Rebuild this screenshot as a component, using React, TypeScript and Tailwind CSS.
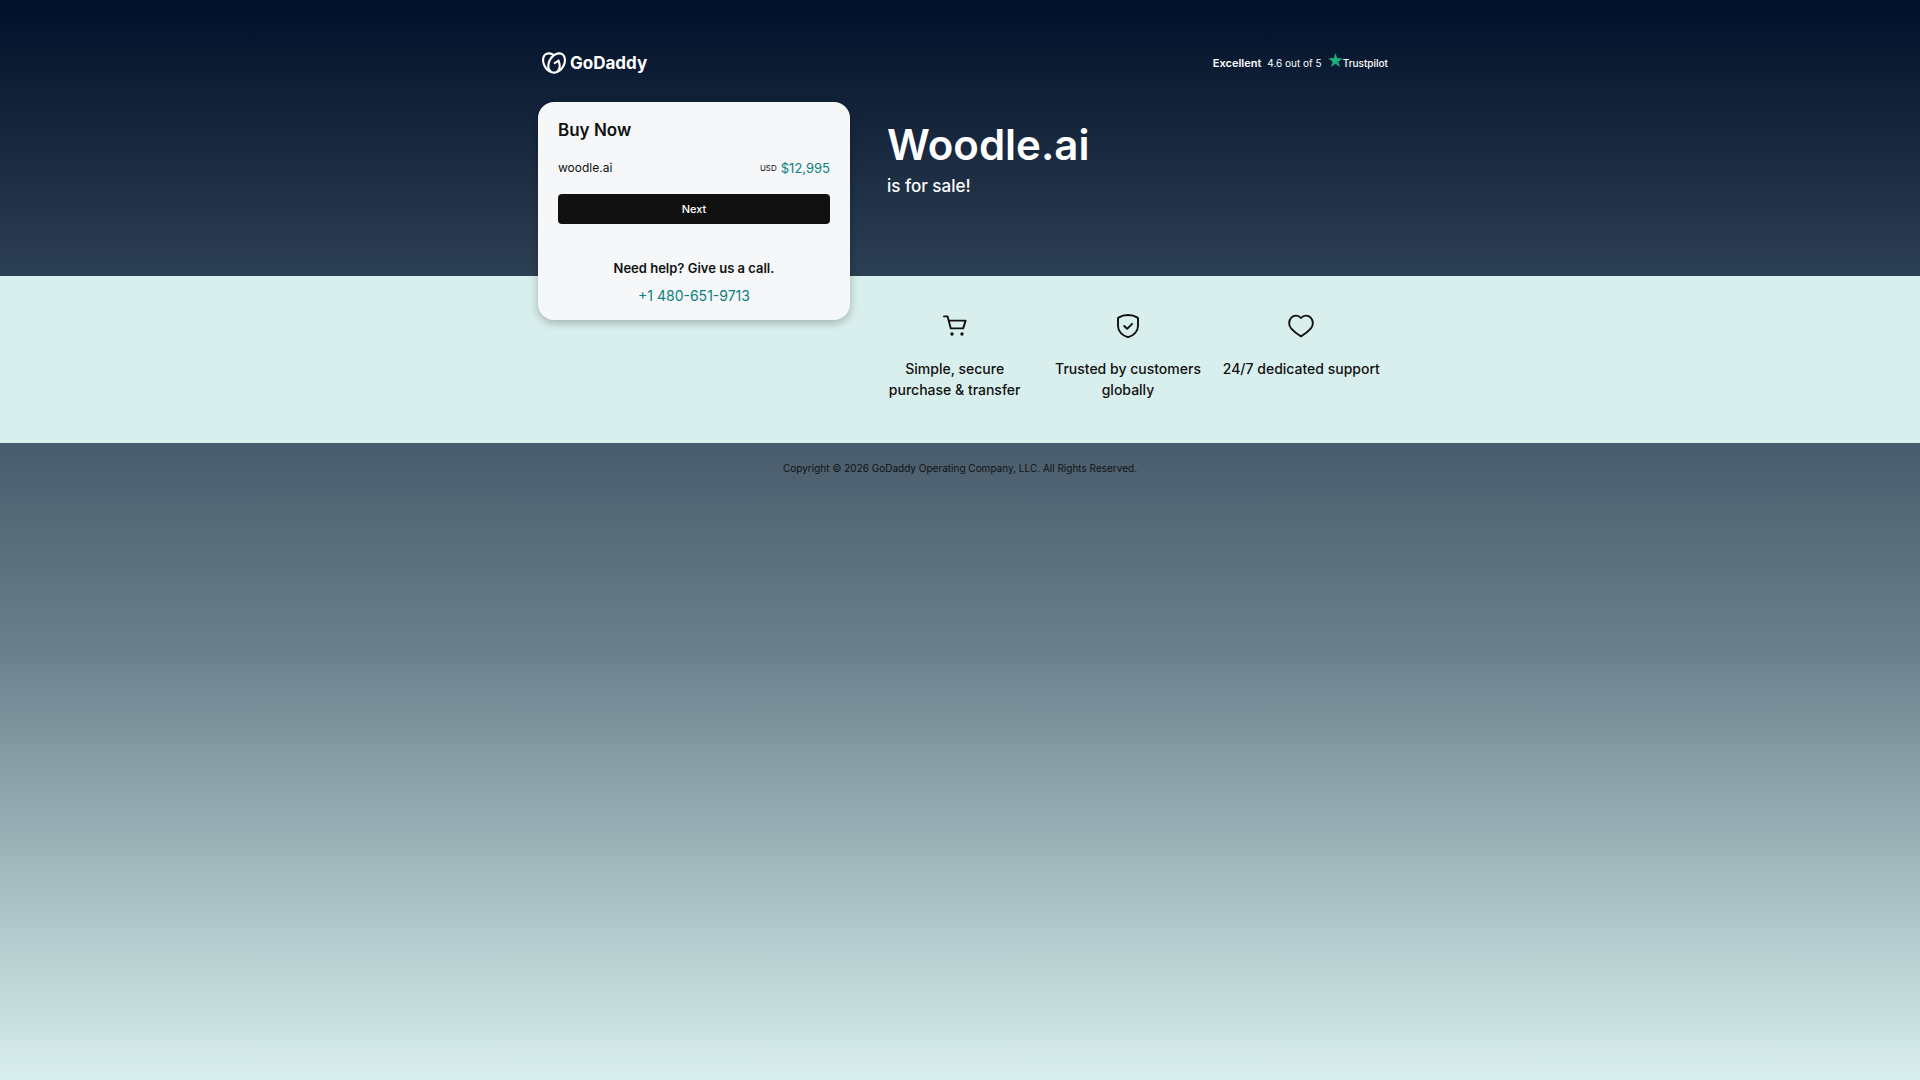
import type { ReactNode } from "react";
import { SiGodaddy } from "react-icons/si";

function CartIcon() {
  return (
    <svg viewBox="0 0 24 24" className="h-6 w-6" fill="none" stroke="currentColor" strokeWidth="1.9" aria-hidden="true">
      <path d="M1 2.4h3.6l3.2 12h12.4L22.6 6.6H5.7" strokeLinecap="round" strokeLinejoin="round" />
      <circle cx="9" cy="20" r="1.7" fill="currentColor" stroke="none" />
      <circle cx="19" cy="20" r="1.7" fill="currentColor" stroke="none" />
    </svg>
  );
}

function ShieldIcon() {
  return (
    <svg
      viewBox="0 0 24 24"
      className="h-6 w-6"
      fill="none"
      stroke="currentColor"
      strokeWidth="1.9"
      strokeLinecap="round"
      strokeLinejoin="round"
      aria-hidden="true"
    >
      <path d="M12 1c3.500 0 7 .9 9.500 2.600.4.300.5.500.5 1V12c0 5.500-4.500 9.600-10 11.200C6.500 21.600 2 17.500 2 12V4.600c0-.5.1-.7.5-1C5 1.900 8.500 1 12 1Z" />
      <path d="m8.200 12 2.900 2.800 5-5" />
    </svg>
  );
}

function HeartIcon() {
  return (
    <svg viewBox="0 0 26 24" className="h-6 w-[26px]" fill="none" stroke="currentColor" strokeWidth="1.9" strokeLinejoin="round" aria-hidden="true">
      <path d="M13 4C10.300.9 5.900.9 3.300 3.600.4 6.600.4 11.500 3.300 14.700c2.400 2.700 6.400 5.800 9.700 7.700 3.300-1.900 7.300-5 9.700-7.700 2.900-3.200 2.900-8.100 0-11.100C20.100.9 15.700.9 13 4Z" />
    </svg>
  );
}

function TrustpilotStar() {
  return (
    <svg viewBox="0 0 24 23" className="h-[14px] w-[15px]" aria-hidden="true">
      <path fill="#1bb27c" d="M24 8.800h-9.200L12 0 9.200 8.800H0l7.400 5.400L4.600 23 12 17.600 19.400 23l-2.800-8.800z" />
      <path fill="#0d7a55" d="m17.200 16.200-.6-2-4.600 3.400z" />
    </svg>
  );
}

const features: { icon: ReactNode; label: string }[] = [
  { icon: <CartIcon />, label: "Simple, secure purchase & transfer" },
  { icon: <ShieldIcon />, label: "Trusted by customers globally" },
  { icon: <HeartIcon />, label: "24/7 dedicated support" },
];

function Header() {
  return (
    <header className="flex h-[26px] items-center justify-between pr-1 pl-[14px] text-white">
      <a href="#" aria-label="GoDaddy" className="flex items-center gap-1">
        <SiGodaddy className="h-6 w-6" />
        <span className="text-[17px] leading-6 font-bold">GoDaddy</span>
      </a>
      <div className="flex items-center gap-1.5 leading-4">
        <span className="text-[11px] font-semibold">Excellent</span>
        <span className="text-[10px]">4.6 out of 5</span>
        <a href="#" className="flex items-start pb-0.5 text-[10px] font-medium">
          <TrustpilotStar />
          <span className="pt-0.5">Trustpilot</span>
        </a>
      </div>
    </header>
  );
}

function BuyCard() {
  return (
    <section className="relative z-10 -mb-11 w-[312px] shrink-0 rounded-2xl bg-[#f5f7f8] px-5 pt-4 pb-3 text-[#111] shadow-[0_3px_8px_rgba(0,0,0,0.25)]">
      <h2 className="text-[17px] leading-6 font-semibold">Buy Now</h2>
      <div className="mt-4 flex items-center justify-between leading-5">
        <span className="text-[12px]">woodle.ai</span>
        <span className="flex items-center gap-1">
          <span className="text-[8px]">USD</span>
          <span className="text-[13px] text-[#0b7f80]">$12,995</span>
        </span>
      </div>
      <button type="button" className="mt-4 h-[30px] w-full rounded bg-[#111] text-[11px] font-medium text-white">
        Next
      </button>
      <div className="mt-8 text-center">
        <p className="text-[13px] leading-6 font-semibold">Need help? Give us a call.</p>
        <a href="tel:+14806519713" className="mt-1 block text-sm leading-6 text-[#0b7f80]">
          +1 480-651-9713
        </a>
      </div>
    </section>
  );
}

export default function App() {
  return (
    <div className="min-h-screen bg-linear-to-b/srgb from-[#001029] via-[#6a7f8b] via-60% to-[#d9efed] font-['Inter','Liberation_Sans',sans-serif]">
      <div className="mx-auto max-w-[864px] pt-[50px]">
        <Header />
        <main className="flex items-start gap-[37px] pt-[26px] pl-2.5">
          <BuyCard />
          <div className="pt-[18px] text-white">
            <h1 className="text-[42px] leading-[50px] font-semibold">Woodle.ai</h1>
            <p className="mt-1 text-[17px] leading-6 font-medium">is for sale!</p>
          </div>
        </main>
      </div>

      <section className="bg-[#d9efed]">
        <div className="mx-auto flex max-w-[864px] justify-end pr-1">
          <ul className="grid w-[520px] grid-cols-3 pt-[38px] pb-[43px] text-[#111]">
            {features.map((feature) => (
              <li key={feature.label} className="flex flex-col items-center px-1.5 text-center">
                {feature.icon}
                <p className="mt-5 text-sm leading-[21px] font-medium">{feature.label}</p>
              </li>
            ))}
          </ul>
        </div>
      </section>

      <footer className="py-4 text-center text-[10px] leading-[18px] text-[#111]">
        Copyright © 2026 GoDaddy Operating Company, LLC. All Rights Reserved.
      </footer>
    </div>
  );
}
